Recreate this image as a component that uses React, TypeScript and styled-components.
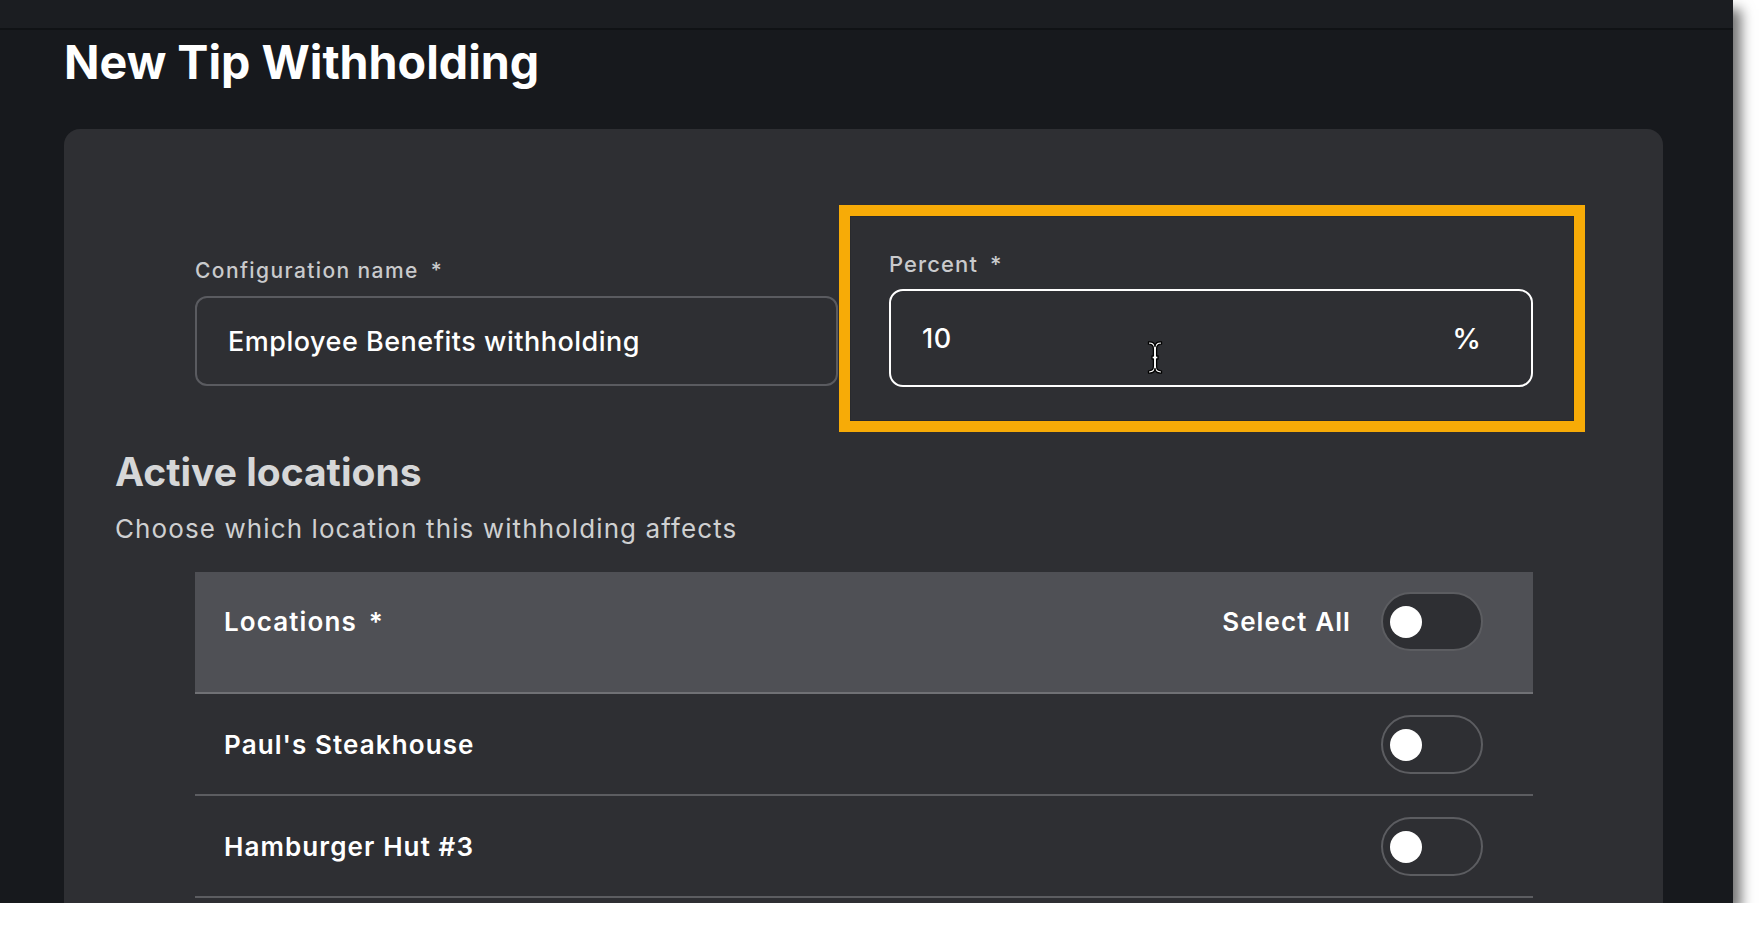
import React, { useState } from "react";
import styled, { createGlobalStyle } from "styled-components";

const GlobalStyle = createGlobalStyle`
    html, body {
        margin: 0;
        padding: 0;
        background: #ffffff;
    }
    body {
        font-family: Inter, "Noto Sans", "Liberation Sans", sans-serif;
        -webkit-font-smoothing: antialiased;
    }
`;

const locations = ["Paul's Steakhouse", "Hamburger Hut #3"];

const Toggle = ({ on, onClick }: { on: boolean; onClick: () => void }) => (
    <Switch $on={on} onClick={onClick} role="switch" aria-checked={on}>
        <Knob $on={on} />
    </Switch>
);

// I-beam mouse cursor sitting over the focused input
const TextCursor = () => (
    <CursorMark width="16" height="35" viewBox="0 0 16 35">
        <path
            d="M1.5 2 Q8 1.5 8 6.5 Q8 1.5 14.5 2 L14.5 4.2 Q9.6 4 9.6 8.5 L9.6 16 L11 16 L11 19 L9.6 19 L9.6 26.5 Q9.6 31 14.5 30.8 L14.5 33 Q8 33.5 8 28.5 Q8 33.5 1.5 33 L1.5 30.8 Q6.4 31 6.4 26.5 L6.4 19 L5 19 L5 16 L6.4 16 L6.4 8.5 Q6.4 4 1.5 4.2 Z"
            fill="#ffffff"
            stroke="#000000"
            strokeWidth="1.3"
            strokeLinejoin="round"
        />
    </CursorMark>
);

const App = () => {
    const [selected, setSelected] = useState<Record<string, boolean>>({});
    const allOn = locations.every((l) => selected[l]);

    const toggleAll = () => {
        const next: Record<string, boolean> = {};
        locations.forEach((l) => (next[l] = !allOn));
        setSelected(next);
    };

    return (
        <>
            <GlobalStyle />
            <Frame>
                <TopBar />
                <Title>New Tip Withholding</Title>
                <Card>
                    <FormBody>
                        <FieldsRow>
                            <Field $offset={6}>
                                <Label>
                                    Configuration name<Required>*</Required>
                                </Label>
                                <InputBox>
                                    <InputText>Employee Benefits withholding</InputText>
                                </InputBox>
                            </Field>
                            <Highlight>
                                <Field>
                                    <Label $big>
                                        Percent<Required>*</Required>
                                    </Label>
                                    <InputBox $focused>
                                        <InputText>10</InputText>
                                        <Suffix>%</Suffix>
                                        <TextCursor />
                                    </InputBox>
                                </Field>
                            </Highlight>
                        </FieldsRow>
                    </FormBody>

                    <SectionTitle>Active locations</SectionTitle>
                    <SectionText>Choose which location this withholding affects</SectionText>

                    <FormBody>
                        <Table>
                            <HeaderRow>
                                <RowLabel>
                                    Locations<Required>*</Required>
                                </RowLabel>
                                <HeaderRight>
                                    <RowLabel>Select All</RowLabel>
                                    <Toggle on={allOn} onClick={toggleAll} />
                                </HeaderRight>
                            </HeaderRow>
                            {locations.map((name) => (
                                <Row key={name}>
                                    <RowLabel>{name}</RowLabel>
                                    <Toggle
                                        on={!!selected[name]}
                                        onClick={() => setSelected({ ...selected, [name]: !selected[name] })}
                                    />
                                </Row>
                            ))}
                        </Table>
                    </FormBody>
                </Card>
            </Frame>
        </>
    );
};

const Frame = styled.div`
    width: 1733px;
    height: 903px;
    overflow: hidden;
    background: #17191d;
    box-shadow: 8px 9px 12px rgba(0, 0, 0, 0.55);
    display: flex;
    flex-direction: column;
`;

const TopBar = styled.div`
    height: 28px;
    flex-shrink: 0;
    background: #1b1d21;
    border-bottom: 2px solid #101215;
`;

const Title = styled.h1`
    margin: 4px 0 39px 64px;
    font-size: 46.6px;
    line-height: 56px;
    font-weight: 700;
    color: #ffffff;
`;

const Card = styled.div`
    margin: 0 70px 0 64px;
    flex: 1;
    background: #2e2f33;
    border-radius: 16px 16px 0 0;
    padding: 123px 0 0 51px;
`;

const FormBody = styled.div`
    padding: 0 130px 0 80px;
`;

const FieldsRow = styled.div`
    display: flex;
    align-items: flex-start;
    gap: 51px;
`;

const Field = styled.div<{ $offset?: number }>`
    width: 644px;
    margin-top: ${(p) => p.$offset || 0}px;
    display: flex;
    flex-direction: column;
`;

const Label = styled.label<{ $big?: boolean }>`
    font-size: ${(p) => (p.$big ? 22 : 21)}px;
    line-height: 25px;
    font-weight: 500;
    letter-spacing: ${(p) => (p.$big ? 1.1 : 1.4)}px;
    color: #c9cacc;
    margin-bottom: ${(p) => (p.$big ? 12 : 13)}px;
`;

const Required = styled.span`
    margin-left: 12px;
`;

const InputBox = styled.div<{ $focused?: boolean }>`
    position: relative;
    box-sizing: border-box;
    height: ${(p) => (p.$focused ? 98 : 90)}px;
    border: 2px solid ${(p) => (p.$focused ? "#ffffff" : "#5a5b60")};
    border-radius: ${(p) => (p.$focused ? 14 : 12)}px;
    padding: 0 50px 0 31px;
    display: flex;
    align-items: center;
    justify-content: space-between;
`;

const InputText = styled.span`
    font-size: 27px;
    font-weight: 500;
    letter-spacing: 0.5px;
    color: #ffffff;
`;

const Suffix = styled.span`
    font-size: 29px;
    font-weight: 500;
    color: #ffffff;
`;

const CursorMark = styled.svg`
    position: absolute;
    left: 256px;
    top: 49px;
`;

const Highlight = styled.div`
    border: 11px solid #f7ab07;
    padding: 36px 41px 34px 39px;
    margin: -47px -52px -45px -50px;
    box-shadow: inset 0 0 0 1px rgba(0, 0, 0, 0.1);
`;

const SectionTitle = styled.h2`
    margin: 61px 0 17px 0;
    font-size: 39px;
    line-height: 48px;
    font-weight: 700;
    color: #d6d7d8;
`;

const SectionText = styled.p`
    margin: 0 0 27px 0;
    font-size: 26px;
    line-height: 32px;
    font-weight: 400;
    letter-spacing: 1.1px;
    color: #cfd0d1;
`;

const Table = styled.div`
    display: flex;
    flex-direction: column;
`;

const HeaderRow = styled.div`
    height: 122px;
    box-sizing: border-box;
    background: #4f5055;
    border-bottom: 2px solid #707175;
    padding: 20px 50px 0 29px;
    display: flex;
    justify-content: space-between;
    align-items: flex-start;
    & > span {
        line-height: 59px;
    }
`;

const HeaderRight = styled.div`
    display: flex;
    align-items: center;
    gap: 30px;
`;

const Row = styled.div`
    height: 102px;
    box-sizing: border-box;
    border-bottom: 2px solid #5c5d61;
    padding: 0 50px 0 29px;
    display: flex;
    justify-content: space-between;
    align-items: center;
`;

const RowLabel = styled.span`
    font-size: 26px;
    font-weight: 600;
    letter-spacing: 1.1px;
    color: #ffffff;
`;

const Switch = styled.button<{ $on: boolean }>`
    position: relative;
    width: 102px;
    height: 59px;
    box-sizing: border-box;
    border-radius: 30px;
    border: 2px solid #5c5d61;
    background: ${(p) => (p.$on ? "#f7ab07" : "#2e2f33")};
    padding: 0;
    cursor: pointer;
`;

const Knob = styled.span<{ $on: boolean }>`
    position: absolute;
    top: 12px;
    left: ${(p) => (p.$on ? 59 : 7)}px;
    width: 32px;
    height: 32px;
    border-radius: 50%;
    background: #ffffff;
`;

export default App;
